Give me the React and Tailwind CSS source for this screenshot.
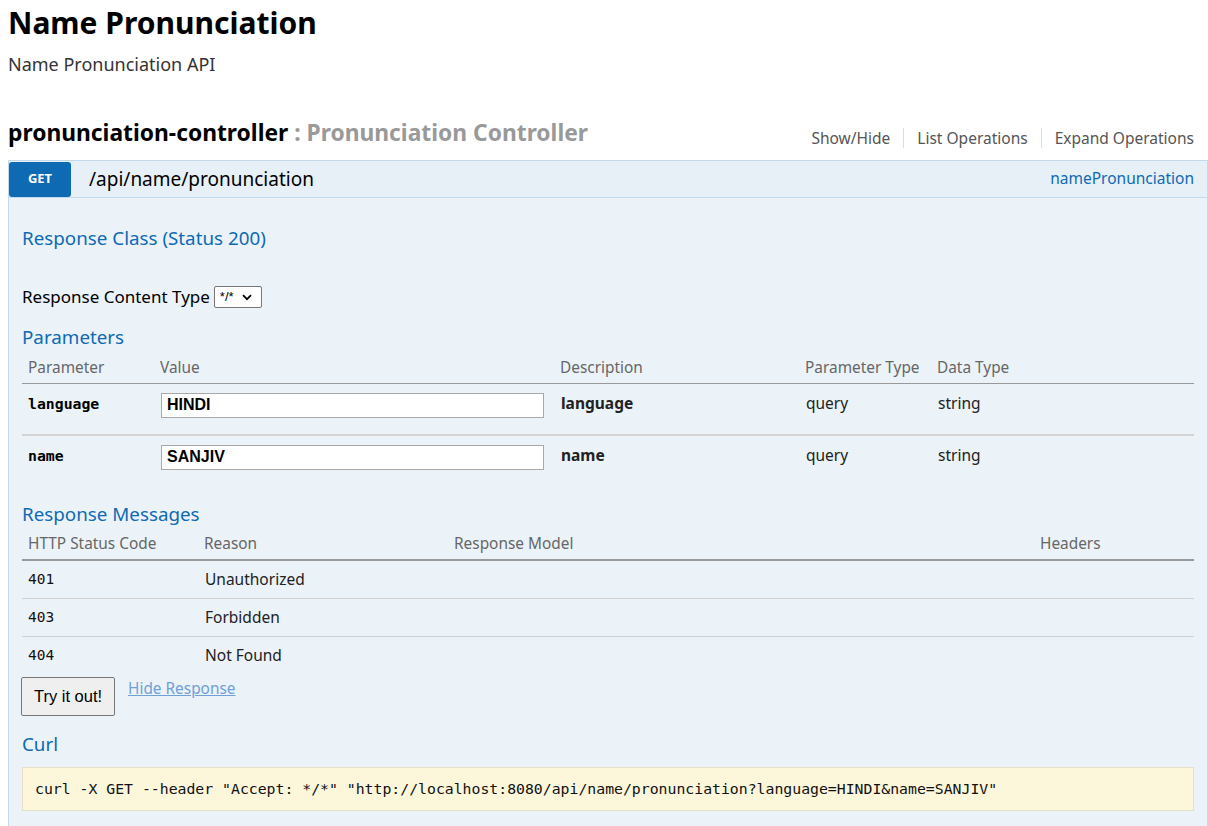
import React from "react";

const sans = "font-['Noto_Sans','Open_Sans',sans-serif]";
const mono = "font-['DejaVu_Sans_Mono','Liberation_Mono',monospace]";
const arial = "font-['Liberation_Sans',Arial,sans-serif]";

function ParamRow({ name, value, border }) {
  return (
    <div
      className={`grid grid-cols-[133px_399px_245px_132px_1fr] pt-[8px] ${
        border ? "h-[52px] border-b-2 border-[#d4d4d4]" : "h-[51px]"
      }`}
    >
      <div className={`pl-[6px] pt-[2px] ${mono} font-bold text-[14.8px] leading-[20px] text-black`}>{name}</div>
      <div className="pl-[6px]">
        <input
          readOnly
          value={value}
          className={`w-[383px] h-[25px] border border-[#a9a9a9] bg-white px-[5px] ${arial} font-bold text-[16px] text-black outline-none`}
        />
      </div>
      <div className="pl-[7px] text-[15.5px] leading-[22px] font-bold text-[#222]">{name}</div>
      <div className="pl-[7px] text-[15.5px] leading-[22px] text-[#222]">query</div>
      <div className="pl-[7px] text-[15.5px] leading-[22px] text-[#222]">string</div>
    </div>
  );
}

function MsgRow({ code, reason, border }) {
  return (
    <div
      className={`grid grid-cols-[176px_250px_586px_1fr] h-[38px] items-center ${
        border ? "border-b border-[#d0d0d0]" : ""
      }`}
    >
      <div className={`pl-[6px] ${mono} text-[14.5px] text-[#111]`}>{code}</div>
      <div className="pl-[7px] text-[15.5px] text-[#222]">{reason}</div>
      <div />
      <div />
    </div>
  );
}

export default function App() {
  return (
    <div className={`${sans} bg-white min-h-[826px] w-[1208px] pl-2 overflow-hidden`}>
      <h1 className="text-[30px] leading-[46px] font-bold text-black">Name Pronunciation</h1>
      <p className="mt-[6px] text-[18px] leading-[24px] text-[#333]">Name Pronunciation API</p>

      <div className="mt-[42px] flex items-end justify-between pr-[14px]">
        <h2 className="text-[22.8px] leading-[30px] font-bold text-black">
          pronunciation-controller
          <span className="text-[#999]"> : Pronunciation Controller</span>
        </h2>
        <div className="flex items-center text-[15.5px] leading-[20px] text-[#555]">
          <span className="pr-[13px]">Show/Hide</span>
          <span className="pl-[13px] pr-[13px] border-l border-[#ddd]">List Operations</span>
          <span className="pl-[13px] border-l border-[#ddd]">Expand Operations</span>
        </div>
      </div>

      <div className="mt-[12px]">
        <div className="h-[38px] border border-[#c3d9ec] bg-[#e7f0f7] flex items-center justify-between pr-[13px]">
          <div className="flex items-center h-full">
            <span className="h-[35px] w-[62px] rounded-[3px] bg-[#0f6ab4] text-white text-[13px] font-bold flex items-center justify-center">
              GET
            </span>
            <span className="ml-[18px] text-[19px] text-black">/api/name/pronunciation</span>
          </div>
          <span className="text-[15.5px] text-[#0f6ab4]">namePronunciation</span>
        </div>

        <div className="border border-t-0 border-[#c3d9ec] bg-[#ebf3f9] px-[13px] pt-[28px] pb-[20px] min-h-[640px]">
          <h4 className="text-[18.8px] leading-[24px] text-[#0f6ab4]">Response Class (Status 200)</h4>

          <div className="mt-[35px] flex items-center text-[17px] leading-[24px] text-black">
            <span>Response Content Type</span>
            <span className={`ml-[4px] h-[22px] w-[48px] border border-[#767676] rounded-[2px] bg-white flex items-center pl-[5px] ${arial} text-[13px] text-black`}>
              */*
              <svg className="ml-[8px]" width="10" height="7" viewBox="0 0 10 7">
                <path d="M1 1.2l4 4 4-4" fill="none" stroke="#000" strokeWidth="1.8" />
              </svg>
            </span>
          </div>

          <h4 className="mt-[16px] text-[18.8px] leading-[24px] text-[#0f6ab4]">Parameters</h4>
          <div className="mt-[7px]">
            <div className="grid grid-cols-[133px_399px_245px_132px_1fr] h-[28px] pt-[2px] border-b border-[#999] text-[15.4px] leading-[20px] text-[#666]">
              <div className="pl-[6px]">Parameter</div>
              <div className="pl-[5px]">Value</div>
              <div className="pl-[6px]">Description</div>
              <div className="pl-[6px]">Parameter Type</div>
              <div className="pl-[6px]">Data Type</div>
            </div>
            <ParamRow name="language" value="HINDI" border />
            <ParamRow name="name" value="SANJIV" />
          </div>

          <h4 className="mt-[15px] text-[18.8px] leading-[24px] text-[#0f6ab4]">Response Messages</h4>
          <div className="mt-[8px]">
            <div className="grid grid-cols-[176px_250px_586px_1fr] h-[27px] border-b-2 border-[#999] text-[15.4px] leading-[20px] text-[#666]">
              <div className="pl-[6px]">HTTP Status Code</div>
              <div className="pl-[6px]">Reason</div>
              <div className="pl-[6px]">Response Model</div>
              <div className="pl-[6px]">Headers</div>
            </div>
            <MsgRow code="401" reason="Unauthorized" border />
            <MsgRow code="403" reason="Forbidden" border />
            <MsgRow code="404" reason="Not Found" />
          </div>

          <div className="mt-[2px] -ml-[1px] flex items-start">
            <button className={`h-[39px] w-[94px] border border-[#767676] rounded-[2px] bg-[#efefef] ${arial} text-[16.5px] text-black`}>
              Try it out!
            </button>
            <a className="ml-[13px] mt-[1px] text-[15.4px] leading-[22px] text-[#6fa0d6] underline">Hide Response</a>
          </div>

          <h4 className="mt-[16px] text-[18.8px] leading-[24px] text-[#0f6ab4]">Curl</h4>
          <div className={`mt-[11px] h-[44px] border border-[#e5e0c6] bg-[#fcf6db] flex items-center pl-[12px] ${mono} text-[14.8px] text-[#111]`}>
            curl -X GET --header "Accept: */*" "http://localhost:8080/api/name/pronunciation?language=HINDI&amp;name=SANJIV"
          </div>
        </div>
      </div>
    </div>
  );
}
